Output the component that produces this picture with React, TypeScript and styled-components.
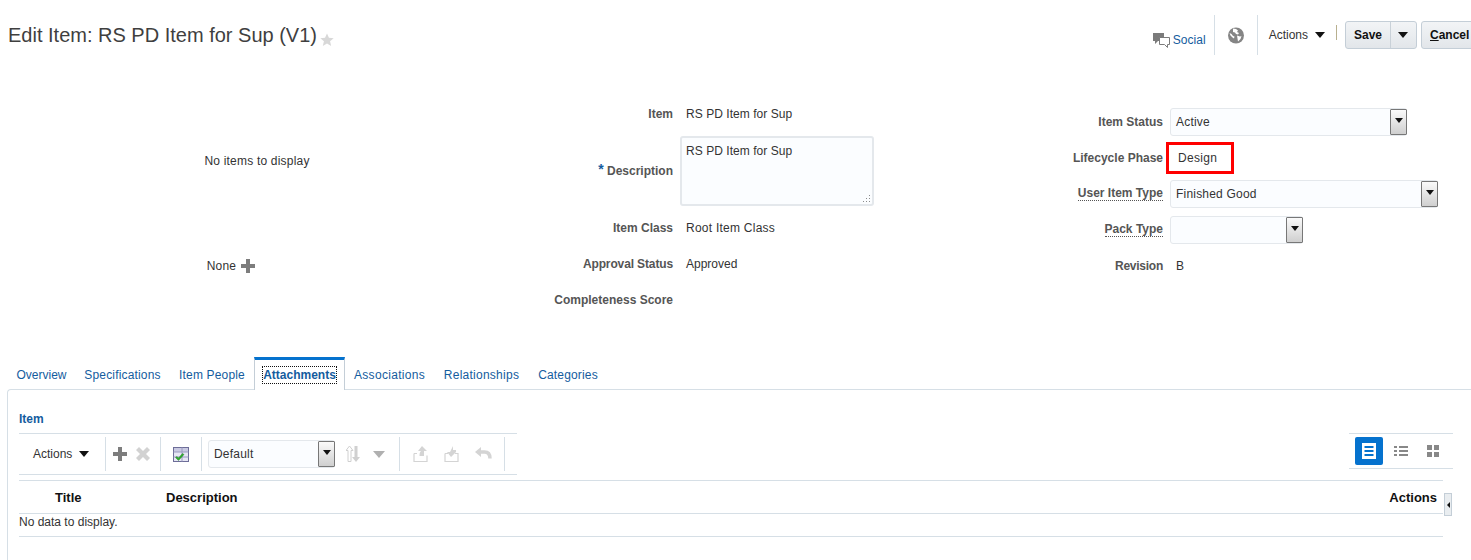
import React from "react";
import styled, { createGlobalStyle } from "styled-components";

const GlobalStyle = createGlobalStyle`
    html, body {
        margin: 0;
        padding: 0;
        background: #fff;
        overflow: hidden;
    }
    body {
        font-family: "Liberation Sans", Arial, sans-serif;
        font-size: 12px;
        color: #333;
    }
`

const tabs = [
    { label: "Overview", width: 67, spacing: 0 },
    { label: "Specifications", width: 95, spacing: 0.17 },
    { label: "Item People", width: 84, spacing: 0.17 },
    { label: "Attachments", width: 91, spacing: 0 },
    { label: "Associations", width: 89, spacing: 0.3 },
    { label: "Relationships", width: 95, spacing: 0.25 },
    { label: "Categories", width: 78, spacing: 0.17 },
]

function Select({ value, width }: { value?: string; width: number }) {
    return (
        <SelectBox $width={width}>
            <span>{value}</span>
            <SelectButton>
                <Caret $size={4} $color="#111" />
            </SelectButton>
        </SelectBox>
    )
}

export default function App() {
    return (
        <Page>
            <GlobalStyle />
            <Header>
                <TitleGroup>
                    <Title>Edit Item: RS PD Item for Sup (V1)</Title>
                    <svg width="14" height="13" viewBox="0 0 15 14">
                        <polygon points="7.5,0.5 9.6,5.2 14.7,5.6 10.8,8.9 12,13.9 7.5,11.2 3,13.9 4.2,8.9 0.3,5.6 5.4,5.2" fill="#d8d8d8" />
                    </svg>
                </TitleGroup>
                <HeaderActions>
                    <SocialLink>
                        <svg width="17" height="16" viewBox="0 0 17 16">
                            <path d="M0 1h11v8H5l-3 3V9H0z" fill="#7b7b7b" />
                            <path d="M6.5 5.5h10v7h-2v3l-3-3h-5z" fill="#fff" stroke="#7b7b7b" />
                        </svg>
                        Social
                    </SocialLink>
                    <HeaderDivider />
                    <GlobeSlot>
                        <svg width="16" height="17" viewBox="0 0 16 17">
                            <circle cx="8" cy="8.5" r="8" fill="#858585" />
                            <path d="M5 1.5l3 .5 2 1.500-1 1.500 2 1-1 1.500-2-.5-1-1.500-2-.5zM9 8.500l3 1 1.500-.5-1 3-2.500 2.500-.5-3zM1.500 6l2 1 1.500 2 1.500 .5-.5 2-1.500-1-2-2z" fill="#fff" />
                        </svg>
                    </GlobeSlot>
                    <HeaderDivider />
                    <ActionsMenu>
                        Actions
                        <Caret $size={5} $color="#111" />
                    </ActionsMenu>
                    <TanDivider />
                    <SplitButton>
                        <SaveLabel>Save</SaveLabel>
                        <SplitArrow>
                            <Caret $size={5} $color="#111" />
                        </SplitArrow>
                    </SplitButton>
                    <CancelButton><u>C</u>ancel</CancelButton>
                </HeaderActions>
            </Header>

            <FormGrid>
                <ImageColumn>
                    <ImageCell $height={129}>No items to display</ImageCell>
                    <ImageCell $height={82} $insetRight={52}>
                        None
                        <svg width="14" height="14" viewBox="0 0 14 14">
                            <path d="M5 0h4v5h5v4H9v5H5V9H0V5h5z" fill="#7d7d7d" />
                        </svg>
                    </ImageCell>
                </ImageColumn>

                <MiddleColumn>
                    <FieldRow>
                        <Label>Item</Label>
                        <Value $spacing={0.05}>RS PD Item for Sup</Value>
                    </FieldRow>
                    <FieldRow $height={78}>
                        <Label><Required>*</Required> Description</Label>
                        <TextArea>
                            RS PD Item for Sup
                            <Grip width="9" height="9" viewBox="0 0 9 9">
                                <path d="M7 1h1v1H7zM7 4h1v1H7zM4 4h1v1H4zM7 7h1v1H7zM4 7h1v1H4zM1 7h1v1H1z" fill="#8c8c8c" />
                            </Grip>
                        </TextArea>
                    </FieldRow>
                    <FieldRow>
                        <Label>Item Class</Label>
                        <Value $spacing={0.25}>Root Item Class</Value>
                    </FieldRow>
                    <FieldRow>
                        <Label $spacing={-0.13}>Approval Status</Label>
                        <Value>Approved</Value>
                    </FieldRow>
                    <FieldRow>
                        <Label>Completeness Score</Label>
                    </FieldRow>
                </MiddleColumn>

                <RightColumn>
                    <FieldRow>
                        <Label>Item Status</Label>
                        <Select value="Active" width={237} />
                    </FieldRow>
                    <FieldRow>
                        <Label>Lifecycle Phase</Label>
                        <Highlight>Design</Highlight>
                    </FieldRow>
                    <FieldRow>
                        <Label $dotted>User Item Type</Label>
                        <Select value="Finished Good" width={268} />
                    </FieldRow>
                    <FieldRow>
                        <Label $dotted>Pack Type</Label>
                        <Select width={133} />
                    </FieldRow>
                    <FieldRow>
                        <Label $spacing={-0.25}>Revision</Label>
                        <Value>B</Value>
                    </FieldRow>
                </RightColumn>
            </FormGrid>

            <TabBar>
                {tabs.map(t => (
                    <Tab key={t.label} $width={t.width} $spacing={t.spacing} $active={t.label === "Attachments"}>
                        {t.label === "Attachments" ? <FocusedText>{t.label}</FocusedText> : t.label}
                    </Tab>
                ))}
            </TabBar>

            <Panel>
                <SectionTitle>Item</SectionTitle>
                <ToolRow>
                    <Toolbar>
                        <ToolbarMenu>
                            Actions
                            <Caret $size={5} $color="#111" />
                        </ToolbarMenu>
                        <ToolDivider />
                        <ToolGroup $gap={9} $width={54} $insetRight={4}>
                            <svg width="14" height="14" viewBox="0 0 14 14">
                                <path d="M5 0h4v5h5v4H9v5H5V9H0V5h5z" fill="#7d7d7d" />
                            </svg>
                            <svg width="14" height="14" viewBox="0 0 14 14">
                                <path d="M3 0l4 4 4-4 3 3-4 4 4 4-3 3-4-4-4 4-3-3 4-4-4-4z" fill="#d2d2d2" />
                            </svg>
                        </ToolGroup>
                        <ToolDivider />
                        <ToolGroup $width={40}>
                            <svg width="16" height="15" viewBox="0 0 16 15">
                                <rect x="0.500" y="0.500" width="15" height="14" fill="#e6e6f4" stroke="#6d6d98" />
                                <rect x="1" y="1" width="14" height="4" fill="#c9c9e2" />
                                <path d="M0.500 5h15M9 0.500v14M0.500 10h15" stroke="#9a9ac0" fill="none" />
                                <path d="M2.500 10.500l1.500-1 1.500 1.500 4-4.500 1.500 1-5.500 6z" fill="#2fae2f" stroke="#1a701a" strokeWidth="0.400" />
                            </svg>
                        </ToolGroup>
                        <ToolDivider />
                        <ViewSelect>
                            <Select value="Default" width={127} />
                        </ViewSelect>
                        <ToolGroup $gap={13} $width={64} $insetRight={3}>
                            <svg width="14" height="18" viewBox="0 0 14 18">
                                <path d="M3.500 1L7 5.500H5v11H2v-11H0z" fill="#fff" stroke="#d0d0d0" />
                                <path d="M8.500 1h3v11H14l-4 5-4-5h2.500z" fill="#d0d0d0" />
                            </svg>
                            <Caret $size={6} $color="#b0b0b0" />
                        </ToolGroup>
                        <ToolGroup $gap={16} $width={105} $divided $insetLeft={1}>
                            <svg width="15" height="18" viewBox="0 0 15 18">
                                <path d="M1 8.500h3M1 8.500v8h13v-6" fill="none" stroke="#d4d4d4" strokeWidth="1.200" />
                                <path d="M9 1l5 5h-3v5H6.500C6.500 8 7 7 8 6H5z" fill="#d4d4d4" />
                            </svg>
                            <svg width="15" height="18" viewBox="0 0 15 18">
                                <path d="M1 8.500h3M11 8.500h3v8H1v-8" fill="none" stroke="#d4d4d4" strokeWidth="1.200" />
                                <path d="M9 1v4h3v2L7 12 3 7h3z" fill="#d4d4d4" />
                            </svg>
                            <svg width="17" height="15" viewBox="0 0 17 15">
                                <path d="M6 0v10L0 5z" fill="#d4d4d4" />
                                <path d="M5 5h4.500c3.500 0 5.500 2.500 5.500 6.500" fill="none" stroke="#d4d4d4" strokeWidth="3.500" />
                            </svg>
                        </ToolGroup>
                        <ToolDivider />
                    </Toolbar>
                    <ViewToolbar>
                        <ViewToggle $active>
                            <svg width="14" height="16" viewBox="0 0 14 16">
                                <path fillRule="evenodd" d="M0 0h14v16H0zM2.500 3v2h9V3zM2.500 7v2h9V7zM2.500 11v2h9v-2z" fill="#fff" />
                            </svg>
                        </ViewToggle>
                        <ViewToggle>
                            <svg width="14" height="10" viewBox="0 0 14 10">
                                <path d="M0 0h3v2H0zM5 0h9v2H5zM0 4h3v2H0zM5 4h9v2H5zM0 8h3v2H0zM5 8h9v2H5z" fill="#888" />
                            </svg>
                        </ViewToggle>
                        <ViewToggle>
                            <svg width="12" height="12" viewBox="0 0 12 12">
                                <path d="M0 0h5v5H0zM7 0h5v5H7zM0 7h5v5H0zM7 7h5v5H7z" fill="#888" />
                            </svg>
                        </ViewToggle>
                    </ViewToolbar>
                </ToolRow>

                <TableRow>
                    <Table>
                        <thead>
                            <tr>
                                <TitleHead>Title</TitleHead>
                                <DescriptionHead>Description</DescriptionHead>
                                <ActionsHead>Actions</ActionsHead>
                            </tr>
                        </thead>
                        <tbody>
                            <tr>
                                <EmptyCell colSpan={3}>No data to display.</EmptyCell>
                            </tr>
                        </tbody>
                    </Table>
                    <Splitter>
                        <Caret $size={3} $color="#111" $left />
                    </Splitter>
                </TableRow>
            </Panel>
        </Page>
    )
}

const Page = styled.div`
    width: 1471px;
    height: 560px;
    overflow: hidden;
`
const Header = styled.div`
    height: 60px;
    display: flex;
    justify-content: space-between;
    padding-left: 8px;
    box-sizing: border-box;
`
const TitleGroup = styled.div`
    display: flex;
    align-items: flex-start;
    gap: 3px;
    padding-top: 24px;
    svg {
        margin-top: 9px;
    }
`
const Title = styled.h1`
    margin: 0;
    font-size: 20px;
    font-weight: normal;
    line-height: 23px;
    color: #3f3f3f;
`
const HeaderActions = styled.div`
    display: flex;
    align-items: center;
    margin-right: -8px;
    height: 70px;
`
const SocialLink = styled.a`
    display: flex;
    align-items: center;
    gap: 3px;
    color: #145c9e;
    letter-spacing: 0.05px;
    padding-top: 9px;
    margin-right: 8px;
`
const HeaderDivider = styled.div`
    width: 1px;
    height: 40px;
    background: #d6dfe6;
`
const GlobeSlot = styled.div`
    width: 42px;
    display: flex;
    justify-content: center;
`
const ActionsMenu = styled.div`
    display: flex;
    align-items: center;
    gap: 7px;
    color: #333;
    padding-left: 11px;
`
const ToolbarMenu = styled(ActionsMenu)`
    width: 86px;
    flex: none;
    box-sizing: border-box;
    padding-left: 14px;
`
const Caret = styled.i<{ $size: number; $color: string; $left?: boolean }>`
    display: block;
    width: 0;
    height: 0;
    ${p => p.$left
        ? `border-top: ${p.$size}px solid transparent;
           border-bottom: ${p.$size}px solid transparent;
           border-right: ${p.$size}px solid ${p.$color};`
        : `border-left: ${p.$size}px solid transparent;
           border-right: ${p.$size}px solid transparent;
           border-top: ${p.$size + 1}px solid ${p.$color};`}
`
const TanDivider = styled.div`
    width: 1px;
    height: 15px;
    margin: 0 8px 5px 11px;
    background: #b8b08f;
`
const SplitButton = styled.div`
    display: flex;
    width: 72px;
    height: 28px;
    box-sizing: border-box;
    border: 1px solid #c4ced7;
    border-radius: 3px;
    background: linear-gradient(#f2f4f6, #e2e6ea);
    margin-right: 4px;
    color: #111;
`
const SaveLabel = styled.div`
    width: 44px;
    display: flex;
    align-items: center;
    justify-content: center;
    font-weight: bold;
    border-right: 1px solid #c9d1d8;
`
const SplitArrow = styled.div`
    flex: 1;
    display: flex;
    align-items: center;
    justify-content: center;
    padding-right: 2px;
`
const CancelButton = styled.div`
    width: 58px;
    height: 28px;
    box-sizing: border-box;
    border: 1px solid #c4ced7;
    border-radius: 3px;
    background: linear-gradient(#f2f4f6, #e2e6ea);
    display: flex;
    align-items: center;
    padding-left: 8px;
    font-weight: bold;
    color: #111;
`
const FormGrid = styled.div`
    display: grid;
    grid-template-columns: 514px 486px 1fr;
    padding-top: 36px;
    height: 261px;
`
const ImageColumn = styled.div`
    display: flex;
    flex-direction: column;
`
const ImageCell = styled.div<{ $height: number; $insetRight?: number }>`
    height: ${p => p.$height}px;
    box-sizing: border-box;
    display: flex;
    align-items: center;
    justify-content: center;
    gap: 5px;
    padding-right: ${p => p.$insetRight ?? 0}px;
    color: #333;
    letter-spacing: 0.2px;
`
const MiddleColumn = styled.div`
    display: grid;
    grid-template-columns: 159px 1fr;
    grid-auto-rows: min-content;
    column-gap: 7px;
`
const RightColumn = styled(MiddleColumn)`
    grid-template-columns: 163px 1fr;
    padding-top: 8px;
`
const FieldRow = styled.div<{ $height?: number }>`
    display: grid;
    grid-column: 1 / -1;
    grid-template-columns: subgrid;
    align-items: center;
    height: ${p => p.$height ?? 36}px;
`
const Label = styled.label<{ $dotted?: boolean; $spacing?: number }>`
    justify-self: end;
    font-weight: bold;
    color: #555;
    line-height: 14px;
    letter-spacing: ${p => p.$spacing ?? 0}px;
    ${p => p.$dotted && "border-bottom: 1px dotted #555; line-height: 13px;"}
`
const Required = styled.span`
    color: #145c9e;
    font-size: 14px;
    line-height: 0;
    vertical-align: 1px;
`
const Value = styled.div<{ $spacing?: number }>`
    padding-left: 6px;
    color: #333;
    letter-spacing: ${p => p.$spacing ?? 0}px;
`
const TextArea = styled.div`
    position: relative;
    width: 194px;
    height: 70px;
    box-sizing: border-box;
    border: 2px solid #e4e8ec;
    border-radius: 3px;
    background: #fbfdff;
    padding: 6px 4px;
    line-height: 14px;
    letter-spacing: 0.05px;
`
const Grip = styled.svg`
    position: absolute;
    right: 1px;
    bottom: 1px;
`
const Highlight = styled.div`
    width: 68px;
    height: 32px;
    box-sizing: border-box;
    margin-left: -4px;
    border: 3px solid #ff0000;
    padding-left: 9px;
    display: flex;
    align-items: center;
    color: #333;
    letter-spacing: 0.3px;
`
const SelectBox = styled.div<{ $width: number }>`
    width: ${p => p.$width}px;
    height: 28px;
    box-sizing: border-box;
    border: 1px solid #e4e8ec;
    border-radius: 3px;
    background: #fbfdff;
    display: flex;
    align-items: center;
    justify-content: space-between;
    padding-left: 5px;
    color: #333;
    letter-spacing: 0.2px;
`
const SelectButton = styled.div`
    width: 17px;
    height: 26px;
    margin-right: -1px;
    box-sizing: border-box;
    border: 1px solid #777;
    border-radius: 1px;
    background: linear-gradient(#fafafa, #cfcfcf);
    display: flex;
    align-items: center;
    justify-content: center;
    padding-bottom: 3px;
`
const TabBar = styled.div`
    display: flex;
    height: 32px;
    padding-left: 8px;
    position: relative;
    z-index: 1;
`
const Tab = styled.div<{ $active?: boolean; $width: number; $spacing: number }>`
    width: ${p => p.$width}px;
    display: flex;
    align-items: center;
    justify-content: center;
    box-sizing: border-box;
    padding-top: 3px;
    color: #145c9e;
    letter-spacing: ${p => p.$spacing}px;
    ${p => p.$active && `
        padding-top: 0;
        height: 33px;
        background: #fff;
        font-weight: bold;
        border-top: 3px solid #0572ce;
        border-left: 1px solid #c4ced7;
        border-right: 1px solid #c4ced7;
    `}
`
const FocusedText = styled.span`
    outline: 1px dotted #111;
    line-height: 14px;
    padding: 1px 0;
`
const Panel = styled.div`
    margin-left: 7px;
    height: 171px;
    box-sizing: border-box;
    border-top: 1px solid #d6dfe6;
    border-left: 1px solid #d6dfe6;
    border-top-left-radius: 4px;
    padding-left: 11px;
`
const SectionTitle = styled.h2`
    margin: 0;
    height: 43px;
    box-sizing: border-box;
    padding-top: 22px;
    font-size: 12px;
    line-height: 14px;
    font-weight: bold;
    color: #145c9e;
`
const ToolRow = styled.div`
    display: flex;
    justify-content: space-between;
    align-items: flex-start;
    width: 1434px;
`
const Toolbar = styled.div`
    width: 498px;
    height: 42px;
    box-sizing: border-box;
    border-top: 1px solid #d6dfe6;
    border-bottom: 1px solid #d6dfe6;
    display: flex;
    align-items: center;
`
const ToolDivider = styled.div`
    width: 1px;
    height: 34px;
    flex: none;
    background: #d6dfe6;
`
const ToolGroup = styled.div<{ $gap?: number; $width: number; $divided?: boolean; $insetLeft?: number; $insetRight?: number }>`
    width: ${p => p.$width}px;
    height: 34px;
    flex: none;
    box-sizing: border-box;
    display: flex;
    align-items: center;
    justify-content: center;
    gap: ${p => p.$gap ?? 0}px;
    padding: 0 ${p => p.$insetRight ?? 0}px 0 ${p => p.$insetLeft ?? 0}px;
    ${p => p.$divided && "border-left: 1px solid #d6dfe6;"}
`
const ViewSelect = styled.div`
    padding-left: 6px;
    flex: none;
`
const ViewToolbar = styled.div`
    width: 104px;
    height: 36px;
    box-sizing: border-box;
    border-top: 1px solid #d6dfe6;
    border-bottom: 1px solid #d6dfe6;
    display: flex;
    align-items: center;
    padding-left: 6px;
    gap: 4px;
`
const ViewToggle = styled.div<{ $active?: boolean }>`
    width: 28px;
    height: 28px;
    display: flex;
    align-items: center;
    justify-content: center;
    border-radius: 2px;
    background: ${p => (p.$active ? "#0572ce" : "transparent")};
`
const TableRow = styled.div`
    display: flex;
    align-items: flex-start;
    margin-top: 5px;
`
const Table = styled.table`
    width: 1424px;
    border-collapse: collapse;
    border-top: 1px solid #d6dfe6;
    table-layout: fixed;
`
const TitleHead = styled.th`
    width: 147px;
    height: 33px;
    box-sizing: border-box;
    padding: 0 0 0 36px;
    text-align: left;
    font-size: 13px;
    color: #111;
    border-bottom: 1px solid #d6dfe6;
`
const DescriptionHead = styled(TitleHead)`
    width: auto;
    padding-left: 0;
`
const ActionsHead = styled(TitleHead)`
    width: 120px;
    padding: 0 6px 0 0;
    text-align: right;
`
const EmptyCell = styled.td`
    height: 23px;
    padding: 0 0 6px;
    box-sizing: border-box;
    color: #333;
    border-bottom: 1px solid #d6dfe6;
`
const Splitter = styled.div`
    width: 8px;
    height: 23px;
    margin: 13px 0 0 1px;
    box-sizing: border-box;
    border: 1px solid #c4ced7;
    background: #e9edf0;
    display: flex;
    align-items: center;
    justify-content: center;
`
